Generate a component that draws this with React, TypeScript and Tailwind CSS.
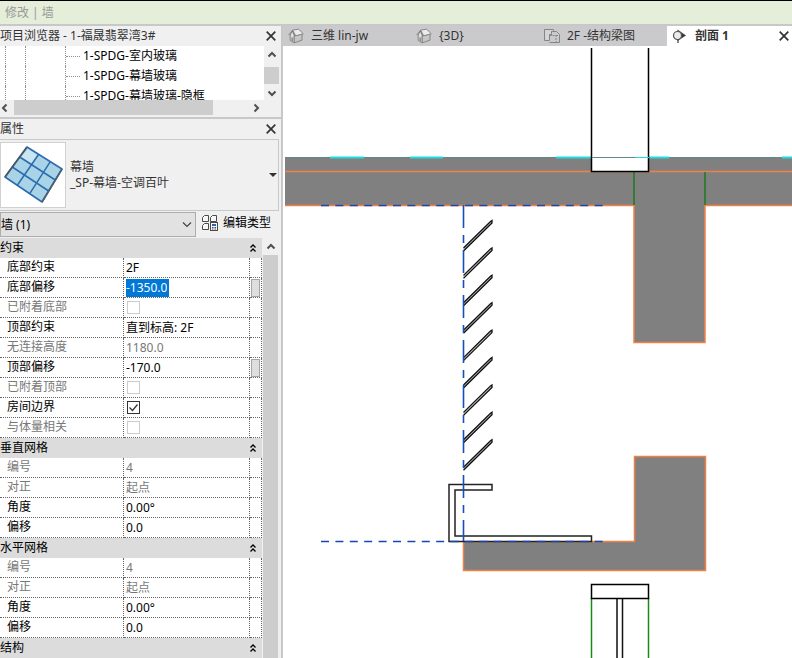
import clsx from 'clsx';

interface Row {
  id: string;
  label: string;
  value?: string;
  check?: boolean;
  locked?: boolean;
  selected?: boolean;
  associable?: boolean;
}

interface Group { title: string; rows: Row[] }

const gridRows = (prefix: string): Row[] => [
  { id: `${prefix}-number`, label: '编号', value: '4', locked: true },
  { id: `${prefix}-justify`, label: '对正', value: '起点', locked: true },
  { id: `${prefix}-angle`, label: '角度', value: '0.00°' },
  { id: `${prefix}-offset`, label: '偏移', value: '0.0' },
];

const groups: Group[] = [
  {
    title: '约束',
    rows: [
      { id: 'base', label: '底部约束', value: '2F' },
      { id: 'base-offset', label: '底部偏移', value: '-1350.0', selected: true, associable: true },
      { id: 'base-attached', label: '已附着底部', check: false, locked: true },
      { id: 'top', label: '顶部约束', value: '直到标高: 2F' },
      { id: 'height', label: '无连接高度', value: '1180.0', locked: true },
      { id: 'top-offset', label: '顶部偏移', value: '-170.0', associable: true },
      { id: 'top-attached', label: '已附着顶部', check: false, locked: true },
      { id: 'room', label: '房间边界', check: true },
      { id: 'mass', label: '与体量相关', check: false, locked: true },
    ],
  },
  { title: '垂直网格', rows: gridRows('vertical') },
  { title: '水平网格', rows: gridRows('horizontal') },
  { title: '结构', rows: [] },
];

const treeItems = ['1-SPDG-室内玻璃', '1-SPDG-幕墙玻璃', '1-SPDG-幕墙玻璃-隐框'];

const chevrons = {
  up: 'M1.5 6.5 5 3l3.5 3.5',
  down: 'M1.5 3.5 5 7l3.5-3.5',
  left: 'M6.5 1.5 3 5l3.5 3.5',
  right: 'M3.5 1.5 7 5 3.5 8.5',
};

function Chevron({ dir }: { dir: keyof typeof chevrons }) {
  return (
    <svg viewBox="0 0 10 10" className="size-[10px]" fill="none" stroke="#505050" strokeWidth="2">
      <path d={chevrons[dir]} />
    </svg>
  );
}

function CloseButton({ label }: { label: string }) {
  return (
    <button type="button" aria-label={label} className="flex size-4 items-center justify-center">
      <svg viewBox="0 0 10 10" className="size-[10px]" fill="none" stroke="#333" strokeWidth="1.7">
        <path d="M.7.7l8.6 8.6M9.3.7.7 9.3" />
      </svg>
    </button>
  );
}

function HouseIcon() {
  return (
    <svg viewBox="0 0 16 16" className="size-4 shrink-0" stroke="#808080" strokeWidth=".9" strokeLinejoin="round">
      <path d="M2.200 7v5.500l4 2.300V7L4.300 3z" fill="#dedede" />
      <path d="M6.200 14.800V7.800l7.800-1.600v6z" fill="#c6c6c6" />
      <path d="M4.500 2.200 10.500 1.200 15.300 5.800 7.500 7.800z" fill="#ececec" />
      <path d="M.6 7.200 4.500 2.200 7.500 7.800" fill="none" />
      <path d="M3.400 9.300v3.500l1.500.8V9.800z" fill="#8a8a8a" stroke="none" />
    </svg>
  );
}

function PlanIcon() {
  return (
    <svg viewBox="0 0 16 16" className="size-4 shrink-0" fill="none" stroke="#858585">
      <path d="M9.500 2.500v-1h-9v11h5v-6h2v-3h2z" fill="#d4d4d5" />
      <path d="M9.500 3.500h3l3 3v8h-10" />
      <path d="M5.500 7.500h6.500v7M12 7.500h3M7.500 3.500v4" strokeDasharray="2 1" />
    </svg>
  );
}

function SectionIcon() {
  return (
    <svg viewBox="0 0 16 16" className="size-4 shrink-0">
      <path d="M5.500 1.500 14 7.500 5.500 13z" fill="#3c3c3c" />
      <circle cx="5.500" cy="7.500" r="4" fill="#ececec" stroke="#555" strokeWidth="1.200" />
      <path d="M6 11.500V15" stroke="#3c3c3c" strokeWidth="1.200" />
    </svg>
  );
}

function EditTypeIcon() {
  return (
    <svg viewBox="0 0 16 16" className="size-4 shrink-0" fill="#f7f7f7" stroke="#4a4a4a">
      <path d="M.5 2.500l2-2h4v6h-6zM8.500 2.500l2-2h4v6h-6zM.5 10.500l2-2h4v6h-6z" />
      <rect x="8.500" y="7.500" width="7" height="8" />
      <path d="M10 10h4" stroke="#2864b4" strokeWidth="2" />
      <path d="M10 12.500h4M10 14h4" strokeDasharray="1 .5" />
    </svg>
  );
}

function PanelIcon() {
  return (
    <svg viewBox="0 0 64 64" className="size-16">
      <path d="M26 4 61 26 41 59 4 34z" fill="#a9d4e8" stroke="#2d6caf" strokeWidth="1.600" strokeLinejoin="round" />
      <path d="M27 6 36 12 31 20 20 14z" fill="#c9e6f2" />
      <path d="M37.700 11.300 16.300 42.300M49.300 18.700 28.700 50.700M18.700 14 54.300 37M11.300 24 47.700 48" stroke="#2d6caf" strokeWidth="1.500" fill="none" />
      <path d="M26 4 4 34" stroke="#4c565e" strokeWidth="1.600" />
      <path d="M61 26 41 59" stroke="#4c6073" strokeWidth="1.600" />
    </svg>
  );
}

function ProjectBrowser() {
  return (
    <section className="border-b-2 border-[#c8c8cb]">
      <header className="flex h-5 items-center justify-between pr-[2px] text-[#333]">
        <h2>项目浏览器 - 1-福晟翡翠湾3#</h2>
        <CloseButton label="关闭项目浏览器" />
      </header>
      <div className="flex h-[54px]">
        <ul className="flex-1 overflow-hidden bg-white pl-[5px]">
          {treeItems.map(item => (
            <li key={item} className="flex h-5">
              <span className="w-5 border-l border-dotted border-[#909090]" />
              <span className="w-10 border-l border-dotted border-[#909090]" />
              <span className="flex w-[15px] items-center border-l border-dotted border-[#909090]">
                <span className="w-full border-t border-dotted border-[#909090]" />
              </span>
              <span className="pl-[3px] leading-5 whitespace-nowrap text-black">{item}</span>
            </li>
          ))}
        </ul>
        <div className="mr-[2px] flex w-[15px] flex-col items-center justify-between">
          <button type="button" aria-label="向上滚动" className="flex h-[18px] items-center"><Chevron dir="up" /></button>
          <span className="h-[17px] w-full bg-[#cdcdcd]" />
          <button type="button" aria-label="向下滚动" className="flex h-[14px] items-center"><Chevron dir="down" /></button>
        </div>
      </div>
      <div className="mr-5 mb-[2px] flex h-[15px] items-center">
        <button type="button" aria-label="向左滚动" className="flex w-[14px]"><Chevron dir="left" /></button>
        <span className="h-full w-[199px] bg-[#cdcdcd]" />
        <button type="button" aria-label="向右滚动" className="ml-auto"><Chevron dir="right" /></button>
      </div>
    </section>
  );
}

function TypeSelector() {
  return (
    <>
      <button type="button" className="mr-[2px] flex h-[72px] items-center border-y border-r border-[#c8c8cb] pr-px text-left">
        <span className="flex size-[66px] items-center justify-center border border-[#d0d0d0] bg-white"><PanelIcon /></span>
        <span className="flex-1 pl-1 leading-4 text-[#333]">
          幕墙<br />_SP-幕墙-空调百叶
        </span>
        <svg viewBox="0 0 8 4" className="h-1 w-2"><path d="M0 0h8L4 4z" fill="#333" /></svg>
      </button>
      <div className="flex h-[27px] items-start pt-px">
        <div className="relative">
          <select aria-label="选择过滤器" className="h-[25px] w-[196px] appearance-none border border-[#adadad] bg-[#e2e2e3] text-black">
            <option>墙 (1)</option>
          </select>
          <svg viewBox="0 0 10 6" className="pointer-events-none absolute top-[10px] right-1 h-[6px] w-[10px]" fill="none" stroke="#444" strokeWidth="1.200">
            <path d="M1 .5l4 4 4-4" />
          </svg>
        </div>
        <button type="button" className="flex h-[22px] items-center gap-[5px] pl-[6px] text-black">
          <EditTypeIcon />编辑类型
        </button>
      </div>
    </>
  );
}

function ValueCell({ row }: { row: Row }) {
  if (row.check !== undefined) {
    return (
      <span className="relative ml-px flex size-[13px]">
        <input
          id={row.id}
          type="checkbox"
          defaultChecked={row.check}
          disabled={row.locked}
          className="peer size-[13px] appearance-none border border-[#333] bg-white disabled:border-[#ccc]"
        />
        <svg viewBox="0 0 13 13" className="pointer-events-none absolute inset-0 hidden size-[13px] peer-checked:block" fill="none" stroke="#333" strokeWidth="1.300">
          <path d="M2.500 6.500l3 3 5-6" />
        </svg>
      </span>
    );
  }
  return (
    <input
      id={row.id}
      type="text"
      defaultValue={row.value}
      disabled={row.locked}
      className={clsx('block h-[18px] pb-px', row.selected ? 'field-sizing-content bg-[#0078d7] pr-[2px] text-white' : 'w-full')}
    />
  );
}

function PropertyTable() {
  return (
    <div className="flex flex-1">
      <table className="w-[262px] table-fixed border-separate border-spacing-0 self-start text-left">
        <colgroup>
          <col className="w-[124px]" />
          <col className="w-[126px]" />
          <col className="w-3" />
        </colgroup>
        {groups.map(g => (
          <tbody key={g.title}>
            <tr className="h-5 bg-[#dcdcdd]">
              <th colSpan={3} className="h-5 p-0 font-normal text-black">
                <div className="flex items-center justify-between pr-[5px]">
                  {g.title}
                  <button type="button" aria-label={`折叠 ${g.title}`}>
                    <svg viewBox="0 0 8 8" className="size-2" fill="none" stroke="#000" strokeWidth="1.300">
                      <path d="M1.500 3.500 4 1l2.500 2.500M1.500 7.500 4 5l2.500 2.500" />
                    </svg>
                  </button>
                </div>
              </th>
            </tr>
            {g.rows.map(r => (
              <tr key={r.id} className={clsx('h-5 bg-white', r.locked ? 'text-[#777]' : 'text-black')}>
                <th className="h-5 border-r border-b border-dotted border-[#666] p-0 pl-[7px] font-normal">
                  <label htmlFor={r.id} className="block h-[19px] leading-[18px]">{r.label}</label>
                </th>
                <td className="h-5 border-r border-b border-dotted border-[#666] p-0 pl-[2px] align-middle">
                  <ValueCell row={r} />
                </td>
                <td className="h-5 border-r border-b border-dotted border-[#666] p-0">
                  {r.associable && (
                    <button type="button" aria-label={`关联 ${r.label}`} className="mx-auto block h-[18px] w-[9px] border border-[#a5a5a5] bg-[#dedede]" />
                  )}
                </td>
              </tr>
            ))}
          </tbody>
        ))}
      </table>
      <div className="ml-px flex w-[15px] flex-col items-center">
        <button type="button" aria-label="向上滚动" className="flex h-[17px] items-center"><Chevron dir="up" /></button>
        <span className="w-full flex-1 bg-[#cdcdcd]" />
      </div>
    </div>
  );
}

function ViewTab({ icon, title }: { icon: React.ReactNode; title: string }) {
  return (
    <button type="button" className="flex w-32 items-center gap-[7px] pl-[5px] whitespace-pre text-[#333]">
      {icon}{title}
    </button>
  );
}

const louvers = [0, 1, 2, 3, 4, 5, 6, 7, 8];

function SectionDrawing() {
  return (
    <svg viewBox="283 46 509 612" preserveAspectRatio="xMinYMin slice" className="block w-full flex-1" fill="none">
      {/* slab and beam */}
      <path d="M285 157H792V206H705V342H634V206H285z" fill="#808080" />
      <path d="M285 157.500H792" stroke="#5f8a8a" />
      <path d="M330 157.500h34M410 157.500h33M556 157.500h36M669 157.500h-21M782 157.500h10" stroke="#20dce0" strokeWidth="2" />
      <path d="M285 171.500H792M285 205.500H634V342.500H705V205.500H792" stroke="#f08048" strokeWidth="1.500" />
      <path d="M634 172v33M705 172v33" stroke="#1c7a1c" strokeWidth="1.500" />

      {/* column above */}
      <path d="M591.500 48V171.500H648.500V48" fill="#fff" stroke="#000" strokeWidth="1.500" />
      <path d="M592 157.500h43" stroke="#5f8a8a" />
      <path d="M635 157.500h14" stroke="#20dce0" />

      {/* lower upstand */}
      <path d="M463.500 541.500H634.500V456.500H705.500V570.500H463.500z" fill="#808080" stroke="#f08048" strokeWidth="1.500" />

      {/* metal channel */}
      <path d="M492 484.500H449V541.500H591.500V536H455V490H492z" fill="#fff" stroke="#222" strokeWidth="1.500" />

      {louvers.map(i => (
        <path
          key={i}
          d="M463.500 248 490.500 221.500 492 220.500 492 223 463.500 251"
          transform={`translate(0 ${i * 27.4})`}
          fill="#bbb"
          stroke="#111"
          strokeWidth="1.300"
        />
      ))}

      {/* reference lines */}
      <path d="M463.500 205V541" stroke="#1450b8" strokeWidth="1.600" strokeDasharray="23 7 8 7" />
      <path d="M321 205.500H606M321 541.500H606" stroke="#1446b4" strokeWidth="1.600" strokeDasharray="8 6.400" />

      {/* window below */}
      <path d="M591.500 598V658M648.500 598V658" stroke="#168a16" strokeWidth="1.500" />
      <path d="M617 598V658M622.500 598V658" stroke="#111" strokeWidth="1.500" />
      <path d="M591.500 584.500H648.500V598.500H591.500z" fill="#fff" stroke="#000" strokeWidth="1.500" />
    </svg>
  );
}

export default function App() {
  return (
    <div className="flex min-h-screen flex-col bg-white font-['Noto_Sans','Noto_Sans_CJK_SC',sans-serif] text-[12px] leading-4">
      <header className="flex h-6 items-center border-t border-black bg-[#e5eed8] pl-[5px] text-[#999]">修改 | 墙</header>
      <div className="flex flex-1">
        <aside className="flex w-[283px] shrink-0 flex-col border-t-2 border-r-2 border-[#c8c8cb] bg-[#f0f0f1]">
          <ProjectBrowser />
          <header className="flex h-5 items-center justify-between pr-[2px] text-[#333]">
            <h2>属性</h2>
            <CloseButton label="关闭属性" />
          </header>
          <TypeSelector />
          <PropertyTable />
        </aside>
        <main className="flex min-w-0 flex-1 flex-col">
          <nav className="flex h-[22px] border-t-2 border-[#c8c8cb] bg-[#cacacc]">
            <ViewTab icon={<HouseIcon />} title="三维 lin-jw" />
            <ViewTab icon={<HouseIcon />} title="{3D}" />
            <ViewTab icon={<PlanIcon />} title="2F -结构梁图" />
            <div className="flex flex-1 items-center justify-between bg-white pl-[5px]">
              <button type="button" className="flex items-center gap-[7px] font-bold text-[#333]">
                <SectionIcon />剖面 1
              </button>
              <CloseButton label="关闭视图" />
            </div>
          </nav>
          <SectionDrawing />
        </main>
      </div>
    </div>
  );
}
